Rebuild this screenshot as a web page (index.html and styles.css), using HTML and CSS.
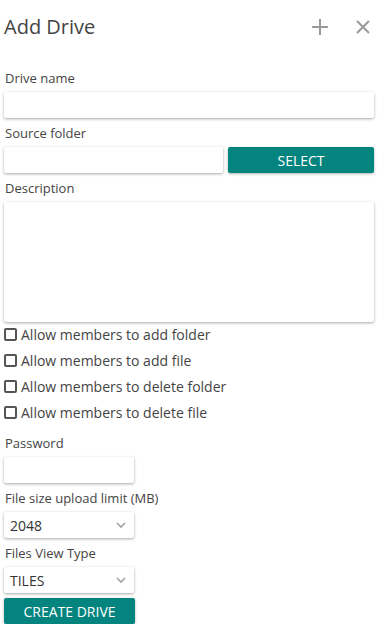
FILE: index.html
```html
<!DOCTYPE html>
<html lang="en">
<head>
    <meta charset="UTF-8">
    <meta name="viewport" content="width=device-width, initial-scale=1.0">
    <title>Add Drive</title>
    <link rel="stylesheet" href="styles.css">
</head>
<body>
    <div class="panel">
        <div class="header">
            <h1 class="title">Add Drive</h1>
            <div class="actions">
                <svg class="icon" width="16" height="16" viewBox="0 0 16 16">
                    <path d="M8 0v16M0 8h16" stroke="#9a9a9a" stroke-width="2" fill="none"/>
                </svg>
                <svg class="icon" width="14" height="14" viewBox="0 0 14 14">
                    <path d="M1 1l12 12M13 1L1 13" stroke="#9a9a9a" stroke-width="2" fill="none"/>
                </svg>
            </div>
        </div>

        <form class="form">
            <label class="label first">Drive name</label>
            <input type="text" class="input">

            <label class="label">Source folder</label>
            <div class="row">
                <input type="text" class="input source">
                <button type="button" class="btn select-btn">SELECT</button>
            </div>

            <label class="label">Description</label>
            <textarea class="input area"></textarea>

            <div class="checks">
                <label class="check"><input type="checkbox"><span class="box"></span>Allow members to add folder</label>
                <label class="check"><input type="checkbox"><span class="box"></span>Allow members to add file</label>
                <label class="check"><input type="checkbox"><span class="box"></span>Allow members to delete folder</label>
                <label class="check"><input type="checkbox"><span class="box"></span>Allow members to delete file</label>
            </div>

            <label class="label gap">Password</label>
            <input type="password" class="input small">

            <label class="label">File size upload limit (MB)</label>
            <div class="dropdown">
                <span>2048</span>
                <svg width="10" height="6" viewBox="0 0 10 6"><path d="M1 1l4 4 4-4" stroke="#a0a0a0" stroke-width="1.6" fill="none"/></svg>
            </div>

            <label class="label">Files View Type</label>
            <div class="dropdown">
                <span>TILES</span>
                <svg width="10" height="6" viewBox="0 0 10 6"><path d="M1 1l4 4 4-4" stroke="#a0a0a0" stroke-width="1.6" fill="none"/></svg>
            </div>

            <button type="button" class="btn create-btn">CREATE DRIVE</button>
        </form>
    </div>
</body>
</html>
```

FILE: styles.css
```css
body {
    margin: 0;
    background: #fff;
    font-family: 'Open Sans', sans-serif;
    color: #444;
}

.panel {
    width: 370px;
    padding: 0 4px;
}

.header {
    height: 54px;
    display: flex;
    align-items: center;
    justify-content: space-between;
}

.title {
    margin: 0;
    font-size: 20px;
    font-weight: 400;
    color: #444;
    line-height: 24px;
}

.actions {
    display: flex;
    align-items: center;
    gap: 28px;
    padding-right: 4px;
}

.icon {
    display: block;
}

.form {
    display: flex;
    flex-direction: column;
    padding-top: 9px;
}

.label {
    display: block;
    font-size: 13px;
    line-height: 18px;
    margin: 6px 0 5px 1px;
}

.label.first {
    margin-top: 6px;
}

.label.gap {
    margin-top: 9px;
}

.input {
    box-sizing: border-box;
    height: 26px;
    width: 370px;
    border: none;
    border-radius: 2px;
    background: #fff;
    box-shadow: 0 1px 3px rgba(0, 0, 0, 0.35);
    font-family: inherit;
    font-size: 14px;
    padding: 0 6px;
    outline: none;
}

.row {
    display: flex;
    gap: 5px;
}

.source {
    width: 219px;
}

.btn {
    height: 26px;
    border: none;
    border-radius: 2px;
    background: #03847e;
    color: #fff;
    font-family: inherit;
    font-size: 14px;
    box-shadow: 0 1px 3px rgba(0, 0, 0, 0.3);
    cursor: pointer;
}

.select-btn {
    width: 146px;
}

.area {
    height: 120px;
    resize: none;
}

.checks {
    margin-top: -1px;
}

.check {
    display: flex;
    align-items: center;
    height: 26px;
    font-size: 14px;
    color: #444;
}

.check input {
    display: none;
}

.box {
    box-sizing: border-box;
    width: 13px;
    height: 13px;
    border: 2px solid #555;
    border-radius: 2px;
    margin-right: 4px;
}

.small {
    width: 130px;
}

.dropdown {
    box-sizing: border-box;
    width: 130px;
    height: 26px;
    display: flex;
    align-items: center;
    justify-content: space-between;
    padding: 0 8px 0 6px;
    border-radius: 2px;
    box-shadow: 0 1px 3px rgba(0, 0, 0, 0.35);
    font-size: 14px;
    color: #333;
}

.create-btn {
    width: 131px;
    margin-top: 5px;
}
```
